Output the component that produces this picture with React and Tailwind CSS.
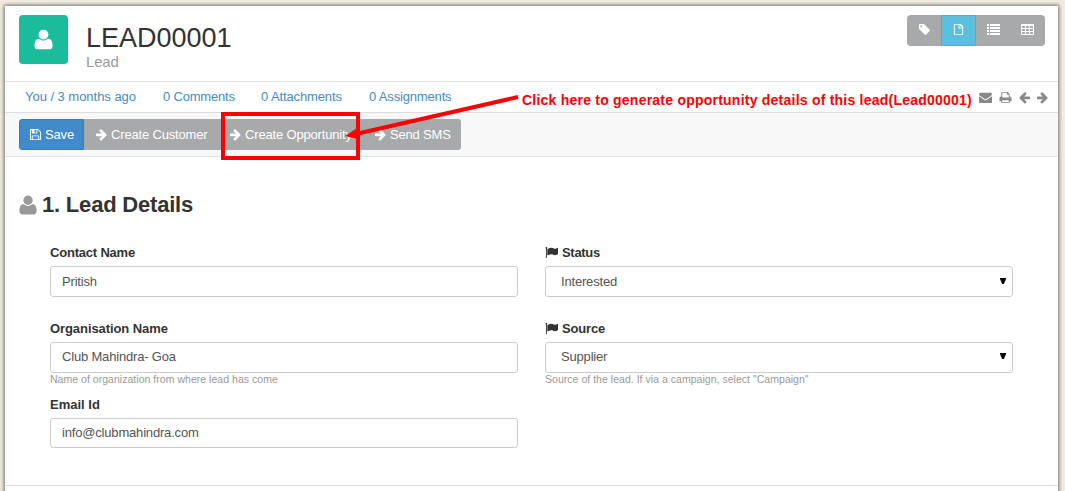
const PATHS = {
  user: "M1600 1405q0 120-73 189.5t-194 69.5h-874q-121 0-194-69.5t-73-189.5q0-53 3.5-103.5t14-109 26.5-108.5 43-97.5 62-81 85.5-53.5 111.5-20q9 0 42 21.5t74.5 48 108 48 133.5 21.5 133.5-21.5 108-48 74.5-48 42-21.5q61 0 111.5 20t85.5 53.5 62 81 43 97.5 26.5 108.5 14 109 3.5 103.5zm-320-893q0 159-112.5 271.5t-271.5 112.5-271.5-112.5-112.5-271.5 112.5-271.5 271.5-112.5 271.5 112.5 112.5 271.5z",
  right: "M1600 960q0 54-37 91l-651 651q-39 37-91 37-51 0-90-37l-75-75q-38-38-38-91t38-91l293-293h-704q-52 0-84.5-37.5t-32.5-90.5v-128q0-53 32.5-90.5t84.5-37.5h704l-293-294q-38-36-38-90t38-90l75-75q38-38 90-38 53 0 91 38l651 651q37 35 37 90z",
  left: "M1664 896v128q0 53-32.5 90.5t-84.5 37.5h-704l293 294q38 36 38 90t-38 90l-75 76q-37 37-90 37-52 0-91-37l-651-652q-37-37-37-90 0-52 37-91l651-650q38-38 91-38 52 0 90 38l75 74q38 38 38 91t-38 91l-293 293h704q52 0 84.5 37.5t32.5 90.5z",
  tag: "M576 448q0-53-37.5-90.5t-90.5-37.5-90.5 37.5-37.5 90.5 37.5 90.5 90.5 37.5 90.5-37.5 37.5-90.5zm1067 576q0 53-37 90l-491 492q-39 37-91 37-53 0-90-37l-715-716q-38-37-64.5-101t-26.5-117v-416q0-52 38-90t90-38h416q53 0 117 26.5t102 64.5l715 714q37 39 37 91z",
  file: "M1468 380q28 28 48 76t20 88v1024q0 40-28 68t-68 28h-1088q-40 0-68-28t-28-68v-1344q0-40 28-68t68-28h736q40 0 88 20t76 48zM1024 264v376h376q-10-29-22-41l-313-313q-12-12-41-22zM1408 1536v-768h-416q-40 0-68-28t-28-68v-416h-512v1280z",
  list: "M0 138h276v276H0zM414 138h1378v276H414zM0 552h276v276H0zM414 552h1378v276H414zM0 966h276v276H0zM414 966h1378v276H414zM0 1380h276v276H0zM414 1380h1378v276H414z",
  table: "M160 128H1632q66 0 113 47t47 113V1504q0 66-47 113t-113 47H160q-66 0-113-47T0 1504V288q0-66 47-113t113-47zM128 414V690H552V414zM690 414V690H1104V414zM1242 414V690H1664V414zM128 828V1104H552V828zM690 828V1104H1104V828zM1242 828V1104H1664V828zM128 1242V1518H552V1242zM690 1242V1518H1104V1242zM1242 1242V1518H1664V1242z",
  envelope: "M1792 710v794q0 66-47 113t-113 47h-1472q-66 0-113-47t-47-113v-794q44 49 101 87 362 246 497 345 57 42 92.5 65.5t94.5 48 110 24.5h2q51 0 110-24.5t94.5-48 92.5-65.5q170-123 498-345 57-39 100-87zm0-294q0 79-49 151t-122 123q-376 261-468 325-10 7-42.5 31t-54 38.5-52 32.5-57.5 27-50 9h-2q-23 0-50-9t-57.5-27-52-32.5-54-38.5-42.5-31q-91-64-262-182.5t-205-142.5q-62-42-117-115.5t-55-136.5q0-78 41.5-130t118.5-52h1472q65 0 112.5 47t47.5 113z",
  print: "M448 1536h896v-256h-896v256zm0-640h896v-384h-160q-40 0-68-28t-28-68v-160h-640v640zm1152 64q0-26-19-45t-45-19-45 19-19 45 19 45 45 19 45-19 19-45zm128 0v416q0 13-9.5 22.5t-22.5 9.5h-224v160q0 40-28 68t-68 28h-960q-40 0-68-28t-28-68v-160h-224q-13 0-22.5-9.5t-9.5-22.5v-416q0-79 56.5-135.5t135.5-56.5h64v-544q0-40 28-68t68-28h672q40 0 88 20t76 48l152 152q28 28 48 76t20 88v256h64q79 0 135.5 56.5t56.5 135.5z",
  save: "M512 1536h768v-384h-768v384zm896 0h128v-896q0-14-10-38.5t-20-34.5l-281-281q-10-10-34-20t-39-10v416q0 40-28 68t-68 28h-576q-40 0-68-28t-28-68v-416h-128v1280h128v-416q0-40 28-68t68-28h832q40 0 68 28t28 68v416zm-384-928v-320q0-13-9.5-22.5t-22.5-9.5h-192q-13 0-22.5 9.5t-9.5 22.5v320q0 13 9.5 22.5t22.5 9.5h192q13 0 22.5-9.5t9.5-22.5zm640 32v928q0 40-28 68t-68 28h-1344q-40 0-68-28t-28-68v-1344q0-40 28-68t68-28h928q40 0 88 20t76 48l280 280q28 28 48 76t20 88z",
  flag: "M320 256q0 72-64 110v1266q0 13-9.5 22.5t-22.5 9.5h-64q-13 0-22.5-9.5t-9.5-22.5v-1266q-64-38-64-110 0-53 37.5-90.5t90.5-37.5 90.5 37.5 37.5 90.5zm1472 64v763q0 25-12.5 38.5t-39.5 27.5q-215 116-369 116-61 0-123.5-22t-108.5-48-115.5-48-142.5-22q-192 0-464 146-17 9-33 9-26 0-45-19t-19-45v-742q0-32 31-55 21-14 79-43 236-120 421-120 107 0 200 29t219 88q38 19 88 19 54 0 117.5-21t110-47 88-47 54.5-21q26 0 45 19t19 45z",
};

function Icon({ name, className = "size-[13px]" }) {
  return (
    <svg viewBox="0 0 1792 1792" fill="currentColor" fillRule={name === "table" ? "evenodd" : "nonzero"} className={`shrink-0 ${className}`} aria-hidden="true">
      <path d={PATHS[name]} />
    </svg>
  );
}

function ActionButton({ icon, label, className }) {
  return (
    <button className={`flex h-[31px] items-center gap-[3px] whitespace-nowrap pl-[11px] tracking-[-0.17px] text-white ${className}`}>
      <Icon name={icon} />
      <span>{label}</span>
    </button>
  );
}

function Field({ label, value, hint, flag, select, labelClass = "", boxClass = "h-[31px]" }) {
  return (
    <div className="h-[76px] w-[468px]">
      <div className="flex h-[22px] items-start gap-[4px] font-bold leading-[18px] text-[#333]">
        {flag && <Icon name="flag" className="mt-[2px] size-[13px]" />}
        <span className={labelClass}>{label}</span>
      </div>
      <div className={`flex items-center justify-between rounded-[3px] border border-[#ccc] bg-white tracking-[-0.18px] text-[#555] ${boxClass} ${select ? "pl-[15px] pr-[6px]" : "pl-[11px]"}`}>
        <span>{value}</span>
        {select && (
          <svg viewBox="0 0 6 6" className="mb-[2px] size-[6px] text-black" fill="currentColor" aria-hidden="true">
            <path d="M0 0h6v1L3.800 6H2.200L0 1z" />
          </svg>
        )}
      </div>
      {hint && <div className="whitespace-nowrap text-[10.5px] leading-[13px] tracking-[0.03px] text-[#999]">{hint}</div>}
    </div>
  );
}

export default function App() {
  return (
    <div className="relative h-[491px] w-[1065px] overflow-hidden bg-[#f4ede3] pl-[5px] pr-[7px] pt-[6px] font-['Liberation_Sans',Arial,sans-serif] text-[13px] leading-[18px]">
      <main className="h-[500px] bg-white shadow-[0_0_4px_1px_rgba(0,0,0,0.55)]">
        <header className="flex h-[76px] items-start justify-between border-b border-[#e5e5e5] pl-[14px] pr-[13px] pt-[9px]">
          <div className="flex">
            <div className="flex size-[49px] items-center justify-center rounded-[4px] bg-[#1abc9c] pb-px text-white">
              <Icon name="user" className="size-[23px]" />
            </div>
            <div className="pl-[18px] pt-[7px]">
              <h1 className="text-[27px] leading-[32px] text-[#333]">LEAD00001</h1>
              <div className="text-[15px] leading-[16px] tracking-[-0.2px] text-[#999]">Lead</div>
            </div>
          </div>
          <div className="flex h-[31px] overflow-hidden rounded-[4px] bg-[#a7a9aa] text-white">
            <button className="flex w-[34px] justify-center pt-[8px]"><Icon name="tag" /></button>
            <button className="flex w-[35px] justify-center border border-[#3fb5d8] bg-[#5bc0de] pt-[7px]"><Icon name="file" /></button>
            <button className="flex w-[35px] justify-center pt-[8px]"><Icon name="list" /></button>
            <button className="flex w-[34px] pl-[10px] pt-[8px]"><Icon name="table" /></button>
          </div>
        </header>

        <nav className="flex h-[31px] items-center justify-between border-b border-[#ddd] pl-[20px] pr-[9px] text-[#428bca]">
          <div className="grid grid-cols-[138px_98px_108px_90px] whitespace-nowrap">
            <a className="tracking-[-0.03px]">You / 3 months ago</a>
            <a className="tracking-[-0.2px]">0 Comments</a>
            <a className="tracking-[-0.12px]">0 Attachments</a>
            <a className="tracking-[-0.16px]">0 Assignments</a>
          </div>
          <div className="flex items-center">
            <span className="mr-[7px] mt-[5px] whitespace-nowrap text-[14px] font-bold tracking-[0.23px] text-[#f00]">Click here to generate opportunity details of this lead(Lead00001)</span>
            <div className="flex gap-[6px] text-[#888]">
              <Icon name="envelope" />
              <Icon name="print" className="ml-[0.5px] size-[13px]" />
              <Icon name="left" />
              <Icon name="right" className="-ml-[0.5px] size-[13px]" />
            </div>
          </div>
        </nav>

        <div className="flex h-[44px] items-start border-b border-[#e5e5e5] bg-[#f8f8f8] pl-[14px] pt-[6px]">
          <ActionButton icon="save" label="Save" className="w-[65px] rounded-l-[3px] border border-[#357ebd] bg-[#428bca] !pl-[9px]" />
          <ActionButton icon="right" label="Create Customer" className="w-[134px] bg-[#a7a9aa]" />
          <ActionButton icon="right" label="Create Opportunity" className="w-[145px] bg-[#a7a9aa]" />
          <ActionButton icon="right" label="Send SMS" className="w-[98px] rounded-r-[3px] bg-[#a7a9aa]" />
        </div>

        <section className="h-[329px] border-b border-[#ddd] pt-[35px]">
          <h2 className="flex items-center gap-[3px] pl-[12px] text-[22px] font-bold leading-[26px] tracking-[-0.2px] text-[#333]">
            <Icon name="user" className="mb-px size-[22px] text-[#999]" />
            <span>1. Lead Details</span>
          </h2>
          <div className="grid grid-cols-[468px_468px] gap-x-[27px] pl-[45px] pt-[26px]">
            <Field label="Contact Name" labelClass="tracking-[-0.2px]" value="Pritish" />
            <Field label="Status" labelClass="tracking-[-0.3px]" value="Interested" flag select />
            <Field label="Organisation Name" labelClass="tracking-[-0.08px]" value="Club Mahindra- Goa" boxClass="h-[31px] pb-[2px]" hint="Name of organization from where lead has come" />
            <Field label="Source" labelClass="tracking-[-0.15px]" value="Supplier" boxClass="h-[31px] pb-[2px]" hint={'Source of the lead. If via a campaign, select "Campaign"'} flag select />
            <Field label="Email Id" value="info@clubmahindra.com" boxClass="h-[30px]" />
          </div>
        </section>
      </main>

      <div className="pointer-events-none absolute left-[221px] top-[112px] h-[48px] w-[139px] border-4 border-[#f00]" />
      <svg className="pointer-events-none absolute left-[340px] top-[90px] h-[55px] w-[185px]" viewBox="340 90 185 55" aria-hidden="true">
        <path d="M518 97L358 133.500" stroke="#f00" strokeWidth="4" />
        <path d="M345 136L356.500 128.500L359.500 139.500Z" fill="#f00" />
      </svg>
    </div>
  );
}
